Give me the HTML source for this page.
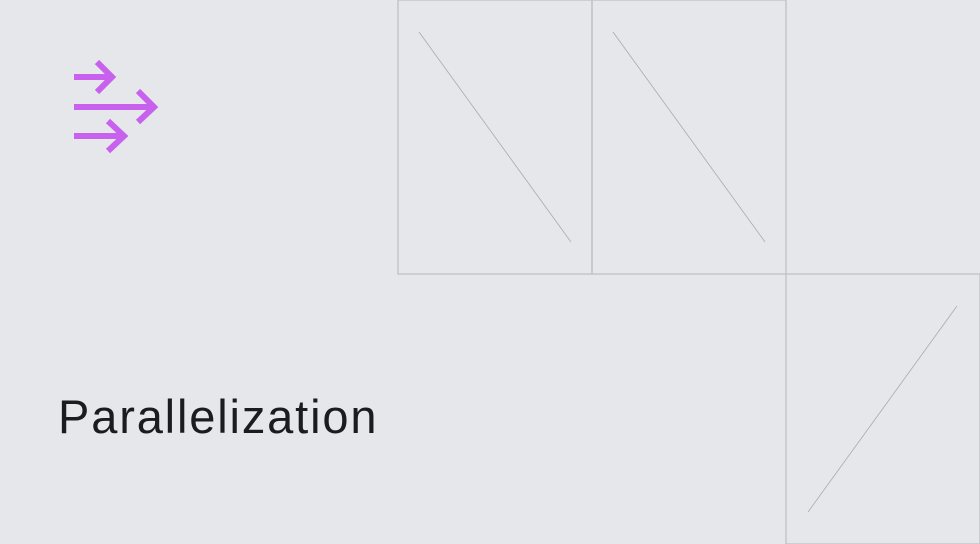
<!DOCTYPE html>
<html><head><style>
html,body{margin:0;padding:0}
body{width:980px;height:544px;background:#e6e7eb;position:relative;overflow:hidden;font-family:"Liberation Sans",sans-serif}
.t{position:absolute;left:58px;top:389px;font-size:47px;color:#1b1c1f;letter-spacing:1.85px;white-space:nowrap}
</style></head><body>
<svg width="980" height="544" style="position:absolute;left:0;top:0">
<g fill="none" stroke="#c4c5c9" stroke-width="1.5">
<rect x="398" y="0" width="194" height="274"/>
<rect x="592" y="0" width="194" height="274"/>
<rect x="786" y="274" width="194" height="270"/>
</g>
<g stroke="#a9aaad" stroke-width="0.8">
<line x1="419" y1="32" x2="571" y2="242"/>
<line x1="613" y1="32" x2="765" y2="242"/>
<line x1="957" y1="306" x2="808" y2="512"/>
</g>
<g fill="none" stroke="#c862ee" stroke-width="6">
<path d="M74 77H113M97 62L112 77L97 92"/>
<path d="M74 107H154M138 91L154 107L138 122"/>
<path d="M74 136H124M108 121L124 136L108 151"/>
</g>
</svg>
<div class="t">Parallelization</div>
</body></html>
